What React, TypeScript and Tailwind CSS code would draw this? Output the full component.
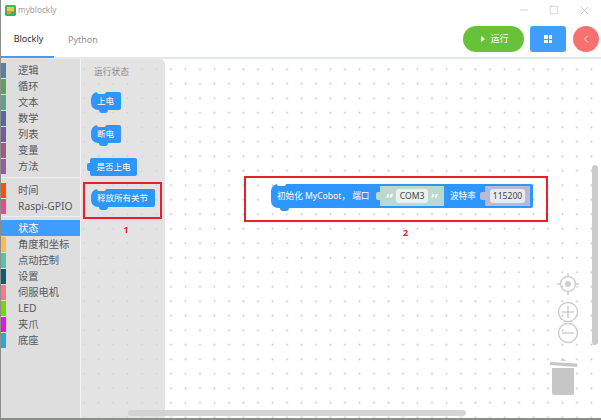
import React from 'react';
import { ChevronLeft, Minus, Square, X } from 'lucide-react';

const font = 'font-["Noto_Sans","Noto_Sans_CJK_SC",sans-serif]';

const groups = [
  [
    { name: '逻辑', color: 'bg-[#5b80a5]' },
    { name: '循环', color: 'bg-[#5ba55b]' },
    { name: '文本', color: 'bg-[#5ba58c]' },
    { name: '数学', color: 'bg-[#5b67a5]' },
    { name: '列表', color: 'bg-[#745ba5]' },
    { name: '变量', color: 'bg-[#a55b80]' },
    { name: '方法', color: 'bg-[#995ba5]' },
  ],
  [
    { name: '时间', color: 'bg-[#ff4f0a]' },
    { name: 'Raspi-GPIO', color: 'bg-[#f0488a]' },
  ],
  [
    { name: '状态', color: 'bg-[#3f9dff]', active: true },
    { name: '角度和坐标', color: 'bg-[#ffbb4a]' },
    { name: '点动控制', color: 'bg-[#55c4ac]' },
    { name: '设置', color: 'bg-[#0c5d78]' },
    { name: '伺服电机', color: 'bg-[#f87a88]' },
    { name: 'LED', color: 'bg-[#74d800]' },
    { name: '夹爪', color: 'bg-[#ee10e6]' },
    { name: '底座', color: 'bg-[#2aa6e0]' },
  ],
];

function StackBlock({ label }: { label: string }) {
  return (
    <div className="relative flex h-[18px] w-fit items-center whitespace-nowrap rounded-l-[7px] rounded-r-[2px] bg-[#2f95ff] pl-[6px] pr-[7px] text-[8.5px] leading-none text-white">
      <span className="absolute left-[6px] top-0 h-[2px] w-[9px] rounded-b-[3px] bg-[#e3e3e3]" />
      <span className="absolute left-[8px] top-[18px] h-[3px] w-[9px] rounded-b-[4px] bg-[#2f95ff]" />
      {label}
    </div>
  );
}

function Category({ name, color, active }: { name: string; color: string; active?: boolean }) {
  return (
    <div className={`flex h-4 items-center ${active ? 'bg-[#3f9dff] text-white' : 'text-[#55595c]'}`}>
      <span className={`h-[15px] w-[5px] shrink-0 ${color}`} />
      <span className="ml-3 whitespace-nowrap text-[10.25px] leading-none">{name}</span>
    </div>
  );
}

export default function App() {
  return (
    <div className={`flex h-[420px] w-[601px] flex-col overflow-hidden border-b-2 border-l border-[#8a8f8a] bg-white ${font}`}>
      {/* title bar */}
      <div className="flex h-[22px] shrink-0 items-center pb-[2px] pl-[4px] text-[#a0a0a0]">
        <svg width="11" height="11" viewBox="0 0 12 12">
          <rect width="12" height="12" rx="2" fill="#2fb36a" />
          <rect x="2" y="2" width="8" height="5" fill="#f5c83a" />
          <rect x="2" y="7" width="5" height="3" fill="#f08a3c" />
        </svg>
        <span className="ml-[2px] text-[8.2px]">myblockly</span>
        <div className="ml-auto flex items-center gap-[18px] pr-[10px]">
          <Minus size={12} strokeWidth={1} />
          <Square size={10} strokeWidth={1} className="mx-[1px]" />
          <X size={13} strokeWidth={1} />
        </div>
      </div>

      {/* tabs and run buttons */}
      <div className="flex h-[37px] shrink-0 items-start border-b-2 border-[#e4e7ed]">
        <div className="flex h-[36px] w-[53px] items-center justify-center border-b-2 border-[#409eff] pl-[2px] text-[9px] text-[#303133]">
          Blockly
        </div>
        <div className="ml-[14px] flex h-[35px] items-center text-[9px] text-[#8c8f94]">Python</div>
        <div className="ml-auto flex items-center pr-[2px] pt-[4px]">
          <button className="flex h-[26px] w-[61px] items-center justify-center gap-[5px] rounded-full bg-[#67c23a] pl-[3px] text-[9px] text-white">
            <span className="h-0 w-0 border-y-[3.5px] border-l-[4px] border-y-transparent border-l-white" />
            运行
          </button>
          <button className="ml-[6px] grid h-[26px] w-[36px] place-content-center rounded-[3px] bg-[#409eff]">
            <span className="grid grid-cols-2 gap-[1px]">
              <i className="h-[3.5px] w-[3.5px] bg-white" />
              <i className="h-[3.5px] w-[3.5px] bg-white" />
              <i className="h-[3.5px] w-[3.5px] bg-white" />
              <i className="h-[3.5px] w-[3.5px] bg-white" />
            </span>
          </button>
          <button className="ml-[7px] grid h-[26px] w-[26px] place-content-center rounded-full bg-[#f87171] text-white">
            <ChevronLeft size={12} strokeWidth={1.5} />
          </button>
        </div>
      </div>

      {/* workspace */}
      <div className="relative flex min-h-0 flex-1 bg-white bg-[radial-gradient(circle,#c4c4c4_0.8px,transparent_1.1px)] bg-[size:14.5px_14.5px] bg-[position:3.25px_3px]">
        {/* toolbox */}
        <div className="w-[80px] shrink-0 border-r border-[#f2f2f2] bg-[#dedede] pt-[3px]">
          {groups.map((items, i) => (
            <div
              key={i}
              className={i === 1 ? 'mt-[3px] border-t border-[#eeeeee] pt-[4px]' : i === 2 ? 'mt-[2px] border-t border-[#eeeeee] pt-[3px]' : ''}
            >
              {items.map((c) => (
                <Category key={c.name} {...c} />
              ))}
            </div>
          ))}
        </div>

        {/* flyout */}
        <div className="w-[84px] shrink-0 rounded-tr-[5px] bg-[#d7d7d7]/70 pl-[2px] pt-[5px]">
          <p className="ml-[11px] text-[8.75px] leading-4 text-[#8a8a8a]">运行状态</p>
          <div className="ml-[8px] mt-[12px]">
            <StackBlock label="上电" />
          </div>
          <div className="ml-[8px] mt-[15px]">
            <StackBlock label="断电" />
          </div>
          <div className="relative ml-[7px] mt-[15px] flex h-[18px] w-[47px] items-center justify-center rounded-[2px] bg-[#2f95ff] text-[8.5px] text-white">
            <span className="absolute left-[-3px] top-[5px] h-[8px] w-[3px] rounded-l-[2px] bg-[#2f95ff]" />
            是否上电
          </div>
          <div className="mt-[6px] h-[37px] w-[79px] border-2 border-[#e8202a] pl-[6px] pt-[5px]">
            <StackBlock label="释放所有关节" />
          </div>
          <p className="mt-[3px] w-[79px] pl-[7px] text-center text-[9px] font-bold leading-4 text-[#e8202a]">1</p>
        </div>

        {/* main block on the canvas */}
        <div className="absolute left-[243px] top-[117px] h-[46px] w-[304px] border-2 border-[#e8202a]">
          <div className="absolute left-[25px] top-[6px] flex h-[24px] w-[262px] items-center rounded-l-[7px] rounded-r-[2px] bg-[#2f95ff] pl-[6px] text-[8.6px] text-white">
            <span className="absolute left-[6px] top-0 h-[2px] w-[9px] rounded-b-[3px] bg-white" />
            <span className="absolute left-[9px] top-[24px] h-[3px] w-[9px] rounded-b-[4px] bg-[#2f95ff]" />
            <span className="w-[99px] whitespace-nowrap">初始化 MyCobot， 端口</span>
            <span className="h-[8px] w-[4px] rounded-l-[2px] bg-[#bcd9cf]" />
            <span className="flex h-[20px] w-[64px] items-center justify-center gap-[3px] bg-[#bcd9cf] text-white">
              <span className="pt-[4px] text-[15px] font-bold leading-none">“</span>
              <span className="rounded-[3px] bg-[#e9f2ee] px-[4px] text-[8.6px] leading-[14px] text-[#444]">COM3</span>
              <span className="pt-[4px] text-[15px] font-bold leading-none">”</span>
            </span>
            <span className="ml-[6px] w-[30px] whitespace-nowrap">波特率</span>
            <span className="h-[8px] w-[5px] rounded-l-[2px] bg-[#b6bad6]" />
            <span className="flex h-[20px] w-[45px] items-center justify-center bg-[#b6bad6]">
              <span className="rounded-[3px] bg-[#e8e9f2] px-[3px] text-[8.6px] leading-[14px] text-[#444]">115200</span>
            </span>
          </div>
          <p className="absolute left-0 top-[47px] w-full pl-[19px] text-center text-[9px] font-bold leading-4 text-[#e8202a]">2</p>
        </div>

        {/* canvas controls */}
        <svg className="absolute left-[555px] top-[213px]" width="24" height="24" viewBox="0 0 24 24" fill="none" stroke="#cfcfcf" strokeWidth="1.5">
          <circle cx="12" cy="12" r="7.5" />
          <path d="M12 1v4M12 19v4M1 12h4M19 12h4" />
          <circle cx="12" cy="12" r="3" fill="#cfcfcf" stroke="none" />
        </svg>
        <svg className="absolute left-[555px] top-[241px]" width="24" height="48" viewBox="0 0 24 48" fill="none" stroke="#cfcfcf" strokeWidth="1.5">
          <circle cx="12" cy="12" r="9.5" />
          <path d="M6 12h12M12 6v12" />
          <circle cx="12" cy="33" r="9.5" />
          <path d="M6 33h12" />
        </svg>
        <svg className="absolute left-[548px] top-[298px]" width="30" height="40" viewBox="0 0 30 40" fill="#c6c6c6">
          <path d="M1 5l27 1.500v3.500L1 8z" />
          <path d="M11 3.500q1-1 3-1.500 2 .5 3 2z" />
          <path d="M3 11h22v25a2 2 0 0 1-2 2H5a2 2 0 0 1-2-2z" />
        </svg>

        {/* scrollbars */}
        <div className="absolute left-[591px] top-[106px] h-[180px] w-[6px] rounded-full bg-[#cccccc]" />
        <div className="absolute left-[127px] top-[351px] h-[6px] w-[338px] rounded-full bg-[#d0d0d0] opacity-90" />
      </div>
    </div>
  );
}
